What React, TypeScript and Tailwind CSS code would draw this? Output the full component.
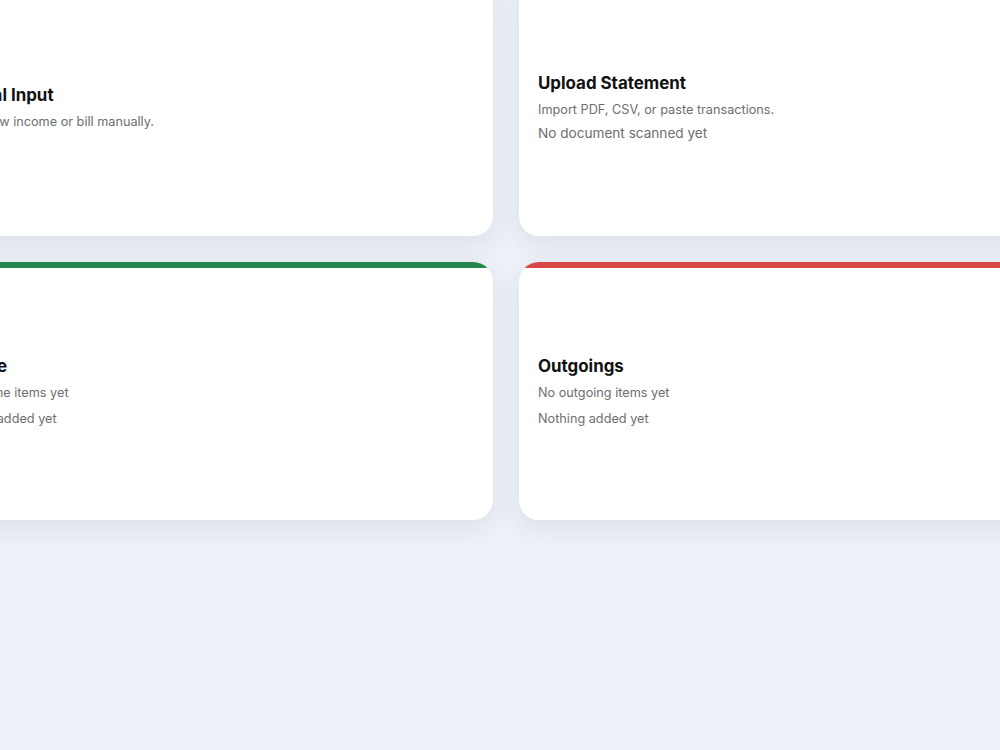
type Card = {
  title: string;
  subtitle: string;
  extra?: string;
  extraClass?: string;
  accent?: string;
};

const cards: Card[] = [
  { title: 'Manual Input', subtitle: 'Add a new income or bill manually.' },
  {
    title: 'Upload Statement',
    subtitle: 'Import PDF, CSV, or paste transactions.',
    extra: 'No document scanned yet',
    extraClass: 'mt-[3px] text-[13.6px]',
  },
  {
    title: 'Income',
    subtitle: 'No income items yet',
    extra: 'Nothing added yet',
    extraClass: 'mt-[6px] text-[12.7px]',
    accent: 'bg-[#23874b]',
  },
  {
    title: 'Outgoings',
    subtitle: 'No outgoing items yet',
    extra: 'Nothing added yet',
    extraClass: 'mt-[6px] text-[12.7px]',
    accent: 'bg-[#d94646]',
  },
];

function PanelCard({ card }: { card: Card }) {
  return (
    <div className="relative flex h-[258px] flex-col justify-center overflow-hidden rounded-[20px] bg-white px-[19px] shadow-[0_8px_28px_rgba(30,41,70,0.09)]">
      {card.accent && <div className={`absolute inset-x-0 top-0 h-[6px] ${card.accent}`} />}
      <h2 className="text-[16.9px] font-bold leading-6 text-[#111111]">{card.title}</h2>
      <p className="mt-[5px] text-[12.7px] leading-5 text-[#6e6e6e]">{card.subtitle}</p>
      {card.extra && (
        <p className={`leading-5 text-[#6e6e6e] ${card.extraClass ?? ''}`}>{card.extra}</p>
      )}
    </div>
  );
}

export default function App() {
  return (
    <div
      className="flex min-h-screen justify-center overflow-hidden bg-[#eef1f8]"
      style={{ fontFamily: 'Inter, "Noto Sans", sans-serif' }}
    >
      <div className="-mt-[22px] ml-[12px] grid h-fit w-[1158px] shrink-0 grid-cols-2 gap-[26px]">
        {cards.map((card) => (
          <PanelCard key={card.title} card={card} />
        ))}
      </div>
    </div>
  );
}
